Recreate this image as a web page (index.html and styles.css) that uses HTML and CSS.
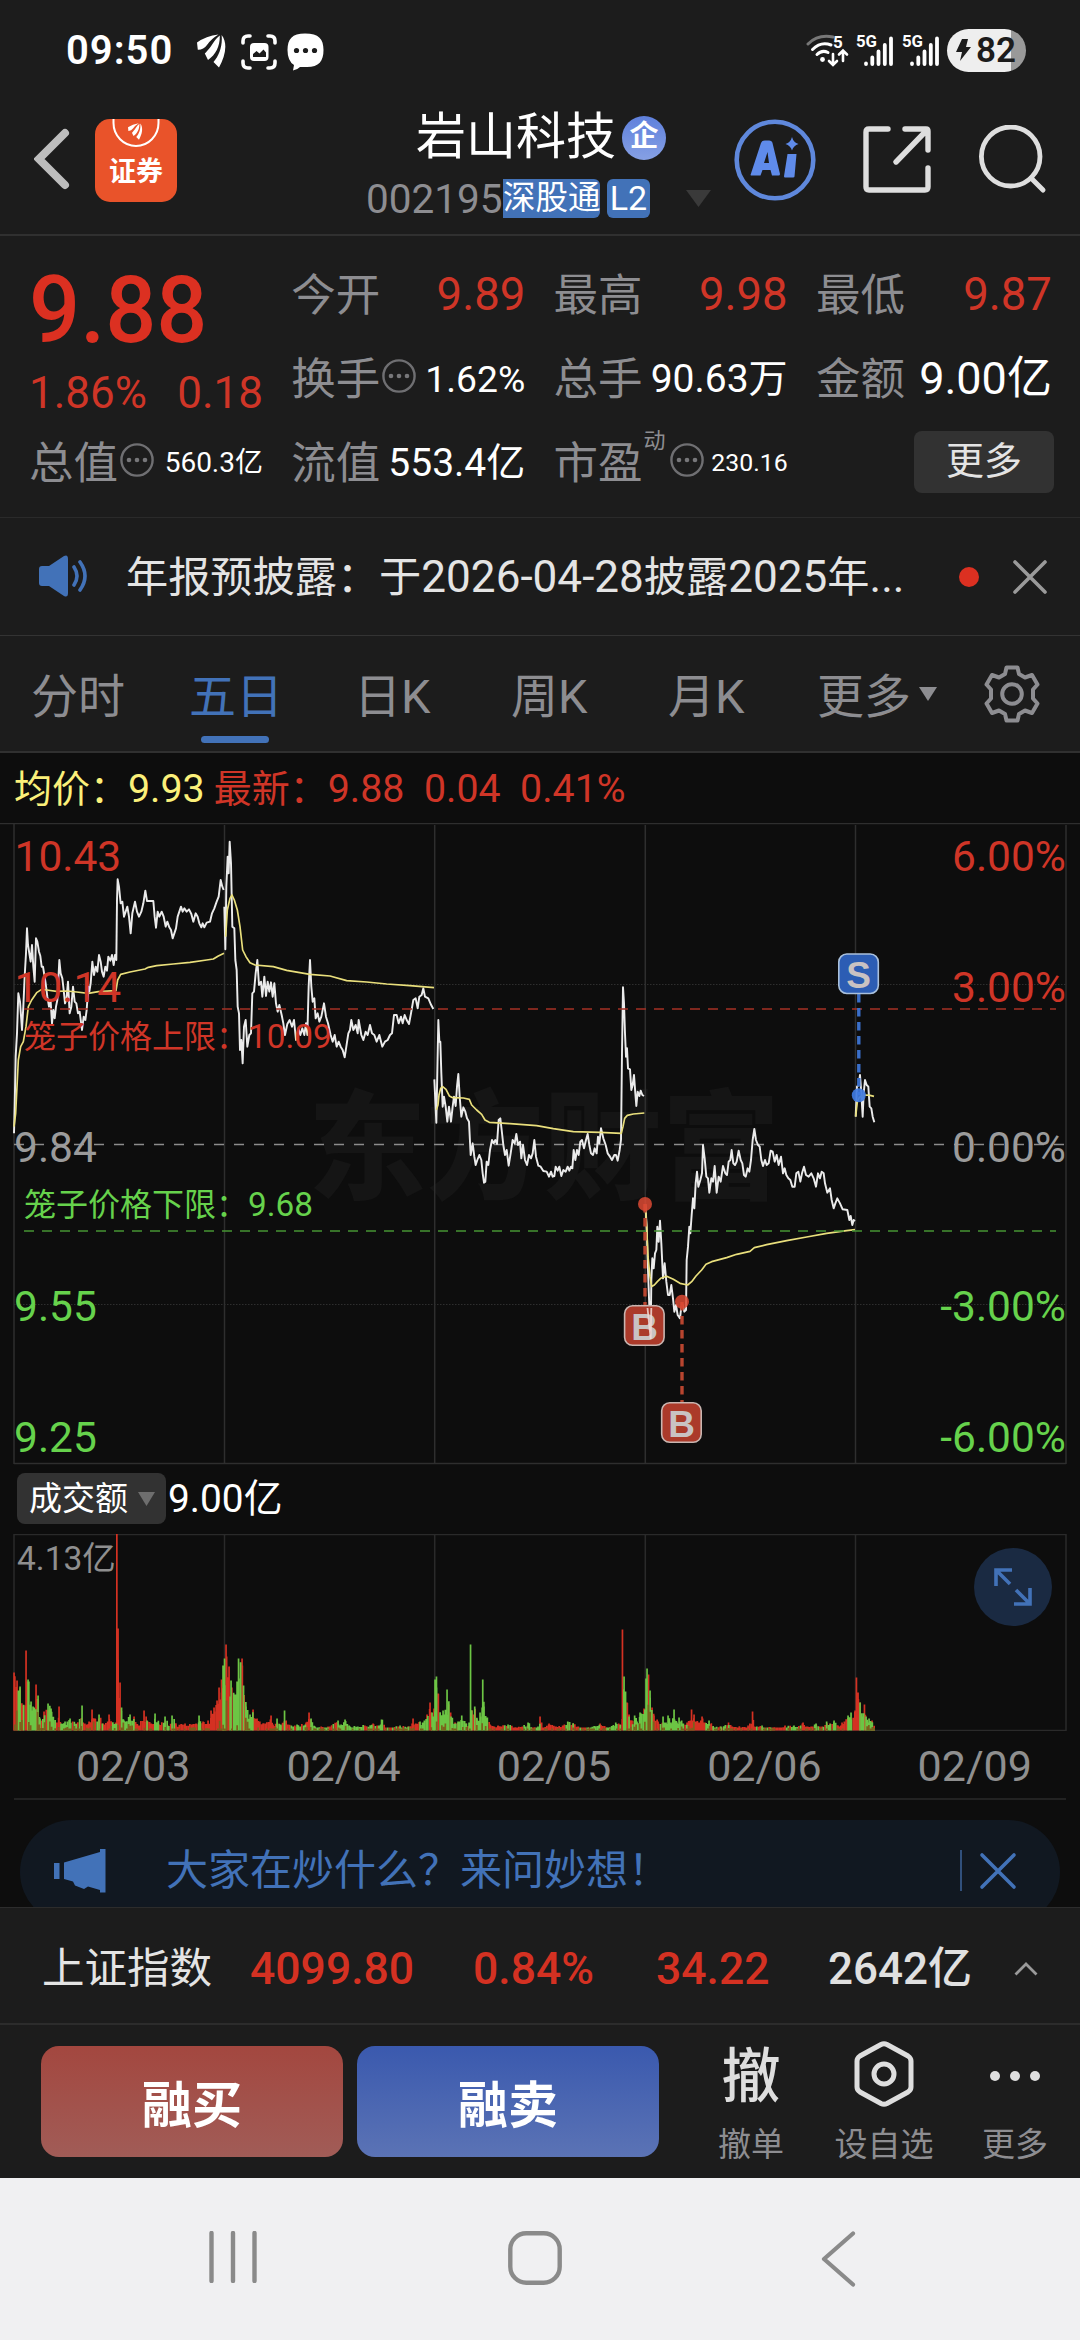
FILE: index.html
```html
<!DOCTYPE html>
<html lang="zh-CN">
<head>
<meta charset="utf-8">
<title>岩山科技 002195</title>
<link rel="stylesheet" href="styles.css">
</head>
<body>
<svg class="defs" width="0" height="0">
  <symbol id="more" viewBox="0 0 34 34"><circle cx="17" cy="17" r="15.6" fill="none" stroke="#6f6f72" stroke-width="2.4"/><circle cx="9" cy="17" r="2.3" fill="#77777a"/><circle cx="17" cy="17" r="2.3" fill="#77777a"/><circle cx="25" cy="17" r="2.3" fill="#77777a"/></symbol>
  <symbol id="wing" viewBox="0 0 30 34"><path d="M0 8.500Q9 2 21.500 .5 14 5 10 11 6.500 16 .8 15.800ZM22.800 1.500C17 6 15 12 10.500 16.500Q9 18.500 7.800 19.500L11 26C19 20.500 23 12 22.800 1.500ZM24.600 1C31 9 28.500 22 22 33.500L16.500 28C22 22 25.800 12 24.600 1Z" fill="currentColor"/></symbol>
</svg>
<div class="screen">

  <div class="status">
    <span class="time">09:50</span>
    <svg class="st-wing" width="30" height="34"><use href="#wing"/></svg>
    <svg class="st-cap" width="36" height="36" viewBox="0 0 36 36"><g fill="none" stroke="#fff" stroke-width="3.600" stroke-linecap="round"><path d="M2 9V7Q2 2 7 2h2M27 2h2q5 0 5 5v2M34 27v2q0 5-5 5h-2M9 34H7q-5 0-5-5v-2"/></g><rect x="9" y="9" width="18.500" height="18" rx="4" fill="#fff"/><path d="M12 23v-3l3.500-3 3 2.500 4-4 2.500 3V23z" fill="#1c1c1c"/></svg>
    <svg class="st-bub" width="37" height="38" viewBox="0 0 37 38"><path d="M18 .5C32 .5 36.500 6 36.500 17S32 34 20 34H13Q10 37 6 37.500L7 32Q.5 28 .5 17C.5 6 5 .5 18 .5Z" fill="#fff"/><g fill="#1c1c1c"><circle cx="9.500" cy="17.500" r="2.600"/><circle cx="18.500" cy="17.500" r="2.600"/><circle cx="27.500" cy="17.500" r="2.600"/></g></svg>
    <div class="st-right">
      <svg width="43" height="34" viewBox="0 0 43 34"><g fill="none" stroke-width="3" stroke-linecap="round"><path d="M2 11Q12 1 27 4" stroke="#777"/><path d="M6.500 16.500Q15 8 25 12" stroke="#fff"/><path d="M11 21.500Q16 16.500 22 19.500" stroke="#fff"/><path d="M27 21v10M23 28l4 4 4-4M37 28V19M33 21.500l4-4 4 4" stroke="#fff" stroke-width="2.600"/></g><circle cx="16.500" cy="26.500" r="2.400" fill="#fff"/><text x="27" y="15" font-size="17" font-weight="700" fill="#fff">5</text></svg>
      <svg width="40" height="40" viewBox="-1 -3 40 40"><text x="0" y="14" font-size="17" font-weight="700" textLength="21" lengthAdjust="spacingAndGlyphs" fill="#fff">5G</text><path d="M10 31v-.5M16.300 31v-6.500M22.500 31V18.500M28.800 31V12M35 31V5.500" stroke="#fff" stroke-width="3.800" stroke-linecap="round"/></svg>
      <svg width="40" height="40" viewBox="-1 -3 40 40"><text x="0" y="14" font-size="17" font-weight="700" textLength="21" lengthAdjust="spacingAndGlyphs" fill="#fff">5G</text><path d="M10 31v-.5M16.300 31v-6.500M22.500 31V18.500M28.800 31V12M35 31V5.500" stroke="#fff" stroke-width="3.800" stroke-linecap="round"/></svg>
      <div class="battery"><svg width="15" height="22" viewBox="0 0 15 22"><path d="M6 0h6L10 8h5L4 22l2-9H0z" fill="#1c1c1c"/></svg>82</div>
    </div>
  </div>

  <div class="head">
    <svg class="h-back" width="36" height="62" viewBox="0 0 36 62"><path d="M31 5 5 31 31 57" fill="none" stroke="#bdbdbd" stroke-width="8" stroke-linecap="round"/></svg>
    <div class="app"><svg width="48" height="30" viewBox="0 0 48 30"><path d="M1.500 0v4a22.500 23 0 0 0 45 0V0" fill="none" stroke="#fff" stroke-width="2"/><g color="#fff"><use href="#wing" x="15" y="4" width="17" height="17"/></g></svg><span>证券</span></div>
    <div class="name">
      <div class="n1">岩山科技<i>企</i></div>
      <div class="n2"><span>002195</span><b class="hk">深股通</b><b class="l2">L2</b></div>
    </div>
    <svg class="h-tri" width="25" height="17" viewBox="0 0 25 17"><path d="M0 0h25L12.500 17z" fill="#3a3a3a"/></svg>
    <svg class="h-ai" width="82" height="82" viewBox="0 0 82 82"><circle cx="41" cy="41" r="38.300" fill="none" stroke="#5f88dc" stroke-width="4.600"/><path d="M16.500 56 27 24q1-2.500 4-2.500h4q3 0 3.500 2.500L46 55q0 1.500-1.500 1.500h-6.500l-1.500-5.500h-8l-2 5.500h-8q-2 0-2-.5Z M33.500 33l-3.500 11h5z" fill="#5f8bea" fill-rule="evenodd"/><path d="M53.500 35h9l-2 22.500q0 1-1.500 1H51q-1 0-1-1.200z" fill="#5f8bea"/><path d="M58 18q1.500 5.500 6.500 7-5 1.500-6.500 6.500-1.500-5-6.500-6.500 5-1.500 6.500-7z" fill="#5f8bea"/></svg>
    <svg class="h-share" width="68" height="68" viewBox="0 0 68 68"><path d="M25 3H6Q3 3 3 6v55q0 3 3 3h56q3 0 3-3V42M42 3H63Q65 3 65 5V24M64 4 33 36" fill="none" stroke="#dedede" stroke-width="5.400" stroke-linecap="round"/></svg>
    <svg class="h-find" width="70" height="70" viewBox="0 0 70 70"><ellipse cx="32.700" cy="31.500" rx="29.300" ry="29.500" fill="none" stroke="#dedede" stroke-width="4.800"/><path d="M53 53 65 65" stroke="#dedede" stroke-width="5" stroke-linecap="round"/></svg>
  </div>

  <div class="quote">
    <div class="price">9.88</div>
    <div class="chg"><span>1.86%</span><span>0.18</span></div>
    <div class="c c13"><label>总值</label><svg width="34" height="34"><use href="#more"/></svg><em class="s28">560.3亿</em></div>
    <div class="c c21"><label>今开</label><em class="red">9.89</em></div>
    <div class="c c31"><label>最高</label><em class="red">9.98</em></div>
    <div class="c c41"><label>最低</label><em class="red">9.87</em></div>
    <div class="c c22"><label>换手</label><svg width="34" height="34"><use href="#more"/></svg><em class="s37">1.62%</em></div>
    <div class="c c32"><label>总手</label><em class="s39">90.63万</em></div>
    <div class="c c42"><label>金额</label><em class="s45">9.00亿</em></div>
    <div class="c c23"><label>流值</label><em class="s39">553.4亿</em></div>
    <div class="c c33"><label>市盈</label><sup>动</sup><svg width="34" height="34"><use href="#more"/></svg><em class="s25">230.16</em></div>
    <div class="c43">更多</div>
  </div>

  <div class="news">
    <svg class="horn" width="50" height="42" viewBox="0 0 50 42"><path d="M3 11h7L25 1q4-2 4 3v34q0 5-4 3L10 31H3q-3 0-3-3V14q0-3 3-3z" fill="#4272b8"/><path d="M35 12q6 9 0 18M41 7q10 14 0 28" fill="none" stroke="#4272b8" stroke-width="3.600" stroke-linecap="round"/></svg>
    <span>年报预披露：于<u>2026-04-28</u>披露<u>2025</u>年<u>...</u></span>
    <i></i>
    <svg class="x" width="36" height="36" viewBox="0 0 36 36"><path d="M3 3 33 33M33 3 3 33" stroke="#9a9a9a" stroke-width="3.600" stroke-linecap="round"/></svg>
  </div>

  <div class="tabs">
    <span>分时</span><span class="on">五日</span><span>日K</span><span>周K</span><span>月K</span><span>更多</span>
    <svg class="t-tri" width="18" height="14" viewBox="0 0 18 14"><path d="M0 0h18L9 14z" fill="#8d8d91"/></svg>
    <svg class="gear" width="58" height="58" viewBox="0 0 58 58"><g fill="none" stroke="#8d8d91" stroke-width="4"><path stroke-linejoin="round" d="M23.500 2.500h11l1.500 6.500 6 3.500 7-2.500 5.500 9.500-4.500 5v9l4.500 5-5.500 9.500-7-2.500-6 3.500-1.500 6.500h-11L22 49l-6-3.500L9 48 3.500 38.500l4.500-5v-9l-4.500-5L9 10l7 2.500L22 9z"/><circle cx="29" cy="29" r="9.800"/></g></svg>
  </div>

  <div class="legend"><span class="avg">均价：<u>9.93</u></span><span class="last">最新：<u>9.88&nbsp; 0.04&nbsp; 0.41%</u></span></div>

  <svg class="chart" width="1080" height="642" viewBox="0 823 1080 642">
    <g class="water"><text x="308" y="1190" textLength="472">东方财富</text></g>
    <g stroke="#2e2e2e" stroke-width="1.500" fill="none">
      <path d="M0 823.500H1080"/>
      <path d="M14 824V1464M224.500 825V1464M434.700 825V1464M645.300 825V1464M855.500 825V1464M1066 825V1464M14 1463.500H1066" />
      <path d="M14 984.500H1066M14 1304.500H1066" stroke-dasharray="1.500 1.500" stroke-width="1"/>
    </g>
    <path d="M14 1144.400H1066" stroke="#8c8c8c" stroke-width="1.500" stroke-dasharray="10 10" fill="none"/>
    <g class="price-line">
      <g transform="translate(0 820) scale(.33333)">
        <path d="M42 940L44 860 47 710 51 640 55 520 60 545 66 630 70 560 74 470 78 400 81 325 84 375 88 400 92 425 96 375 100 440 104 485 108 355 112 365 117 395 121 408 125 440 129 440 133 465 137 490 142 530 147 560 152 545 156 610 160 570 164 595 168 560 172 540 175 480 178 420 182 460 187 475 191 510 195 550 199 540 204 485 209 580 214 560 219 500 224 545 229 550 234 580 239 575 246 630 251 590 256 600 260 570 265 500 268 515 272 490 277 425 282 465 287 440 292 455 297 405 302 425 306 455 311 470 316 440 321 452 325 410 331 422 336 405 341 435 345 405 349 420 351 240 353 178 357 200 362 250 367 245 372 290 377 275 382 260 387 290 392 340 397 280 405 245 411 275 417 290 424 275 430 250 436 212 441 243 460 243 464 290 468 323 473 275 478 290 485 275 491 290 497 320 502 305 508 322 513 330 518 355 523 340 528 325 533 290 538 275 543 260 548 275 553 265 560 275 567 268 574 282 580 305 587 280 593 290 598 310 604 322 608 310 613 322 620 308 630 305 636 280 643 265 650 245 656 230 662 180 667 200 671 210"/>
        <path d="M673 260L676 388 679 200 683 110 686 160 689 65 693 130 697 320 703 325 706 420 710 450 713 560 717 580 720 690 724 660 728 730 732 620 737 600 742 680 748 645 753 640 757 520 762 515 767 460 772 420 777 495 783 485 787 530 793 470 798 528 803 485 808 515 813 487 818 530 823 490 828 550 833 575 838 555 845 585 850 610 855 645 862 612 869 600 876 620 882 600 888 660 895 625 901 645 907 625 913 645 918 610 922 645 926 500 930 420 934 500 938 545 943 535 947 595 953 580 958 605 964 590 972 550 978 590 984 610 992 645 998 665 1004 645 1010 680 1016 665 1022 680 1028 690 1034 712 1039 680 1045 640 1050 630 1054 600 1060 630 1067 615 1073 640 1076 600 1084 645 1090 660 1097 635 1103 645 1110 615 1116 640 1123 645 1130 665 1138 645 1147 680 1155 665 1163 660 1170 645 1176 640 1182 585 1190 585 1196 610 1203 590 1208 610 1214 585 1220 600 1227 612 1233 580 1240 540 1247 535 1253 565 1258 530 1265 525 1270 505 1275 530 1285 535 1292 552 1300 567"/>
        <path class="avg-l" d="M42 920L47 880 55 720 62 680 70 665 78 620 85 560 95 540 110 518 125 508 140 510 170 514 200 513 230 516 265 520 295 515 348 512 353 480 362 463 390 456 435 447 445 442 470 437 520 432 570 427 620 420 640 417 655 408 672 400M677 350L682 270 690 235 696 225 703 240 712 270 720 320 728 390 738 410 750 428 765 435 820 440 860 451 930 463 990 468 1040 482 1100 486 1160 492 1230 497 1302 503"/>
      </g>
      <g transform="translate(420 820) scale(.33333)">
        <path d="M43 778L49 908 55 600 58 665 61 665 64 760 68 860 72 830 77 860 82 905 87 860 93 905 98 860 102 830 107 858 111 800 115 762 119 830 124 890 130 862 136 875 141 895 147 905 152 1005 158 970 163 1010 167 1035 172 1020 178 1005 184 1020 188 1060 192 1088 196 1085 200 1025 205 1035 210 990 216 960 221 970 226 960 231 972 236 900 241 895 245 930 250 975 255 1005 260 990 266 1037 272 1000 278 960 284 970 289 942 294 975 300 965 304 1015 309 975 315 1020 321 1035 327 1005 333 1015 338 1000 343 960 348 1010 355 1037 362 1040 370 1053 380 1055 387 1070 393 1055 398 1070 403 1068 407 1040 413 1052 418 1040 424 1068 430 1050 437 1055 443 1040 448 1052 453 1040 457 1045 461 990 466 1020 471 990 476 1005 481 965 486 960 492 985 498 960 503 942 508 975 513 1000 519 1005 524 985 530 1000 534 950 538 970 543 925 550 955 557 975 563 1000 570 1010 576 1020 583 1005 588 1005 593 1022 599 990 603 960 606 700 609 502 612 550 615 640 618 710 621 685 624 745 630 748 634 810 638 795 642 765 646 820 649 858 653 815 658 828 662 812 667 825 672 828"/>
        <path class="avg-l" d="M49 870L54 855 57 825 62 805 68 800 78 808 88 828 98 833 130 834 148 838 155 855 170 870 185 883 195 900 208 907 270 911 350 917 400 926 460 935 540 937 604 940 609 920 614 895 622 886 640 882 673 879"/>
      </g>
      <g transform="translate(620 960) scale(.33333)">
        <path d="M76 732L80 800 84 930 88 1040 92 1137 94 960 97 895 101 925 105 880 109 870 112 800 116 845 120 782 124 850 129 955 134 910 139 965 144 1005 149 1005 154 975 159 1015 163 1055 168 1035 173 1065 180 1075 184 1040 188 1035 193 1055 198 1050 200 900 204 860 208 800 211 820 215 765 219 715 223 745 227 670 231 635 235 680 241 660 246 640 249 555 254 595 259 650 264 655 268 698 274 655 279 665 284 618 290 698 296 650 302 665 309 618 316 640 321 645 326 605 331 600 335 570 340 610 345 615 350 605 356 572 362 600 367 610 372 645 377 650 383 625 388 635 393 600 398 540 403 507 408 540 414 555 419 560 424 600 429 618 435 600 440 615 446 610 452 572 458 575 464 605 470 585 476 615 483 590 489 640 494 625 499 645 505 655 511 660 517 680 524 680 529 640 535 635 541 665 546 640 552 620 558 645 566 650 574 640 581 655 588 680 594 640 600 655 605 635 611 640 615 670 622 698 630 685 635 720 641 745 646 730 652 715 660 730 668 748 682 750 688 780 692 768 697 795 701 780 705 783"/>
        <path d="M707 470L711 380 716 375 720 345 724 400 728 470 731 400 735 360 740 375 745 380 749 440 754 445 758 470 763 487"/>
        <path class="avg-l" d="M76 735L80 800 84 890 90 950 95 980 103 975 112 965 122 955 140 949 160 958 180 970 203 975 215 965 228 948 245 930 258 913 275 905 320 893 350 883 390 874 403 863 440 854 500 842 560 831 620 820 680 812 705 809M707 470L712 425 718 412 735 405 750 406 762 409"/>
      </g>
    </g>
    <g fill="none" stroke-width="1.600" stroke-dasharray="10 8"><path d="M24 1009H1056" stroke="#a53024"/><path d="M24 1231H1056" stroke="#459433"/></g>
    <g class="axis">
      <g fill="#cf3527"><text x="14.500" y="870.500">10.43</text><text x="14.500" y="1002">10.14</text><text x="1066" y="870.500" class="r">6.00%</text><text x="1066" y="1002" class="r">3.00%</text></g>
      <g fill="#9b9b9b"><text x="14" y="1161.500">9.84</text><text x="1066" y="1161.500" class="r">0.00%</text></g>
      <g fill="#66d24c"><text x="14" y="1321">9.55</text><text x="14" y="1452">9.25</text><text x="1066" y="1321" class="r">-3.00%</text><text x="1066" y="1452" class="r">-6.00%</text></g>
    </g>
    <g class="cage"><text x="24" y="1048" fill="#cf3527">笼子价格上限：<tspan>10.09</tspan></text><text x="24" y="1215.500" fill="#66d24c">笼子价格下限：<tspan>9.68</tspan></text></g>
    <g fill="none" stroke-width="3.400" stroke-dasharray="8.500 5.500"><path d="M858.800 994V1095" stroke="#3a6fc9"/><path d="M645 1204V1305M682 1302V1402" stroke="#b8452f"/></g>
    <circle cx="858.800" cy="1095.300" r="7" fill="#3f7ae0" opacity=".92"/>
    <g fill="#dd4a34" opacity=".85"><circle cx="645" cy="1204" r="7"/><circle cx="682" cy="1301.700" r="7"/></g>
    <g class="tag" stroke-width="1.600" stroke="#c9b5b0"><rect x="838.800" y="954" width="39.500" height="39.500" rx="8" fill="#2c5db4" stroke="#a9c0dc"/><rect x="624.600" y="1305.800" width="39.500" height="39.500" rx="8" fill="#ab3a2a"/><rect x="661.700" y="1402.800" width="39.500" height="39.500" rx="8" fill="#ab3a2a"/></g>
    <g class="tag-t" fill="#c9c2c2"><text x="858.500" y="987.500">S</text><text x="644.500" y="1339.500">B</text><text x="681.500" y="1436.500">B</text></g>
    <path d="M647.500 1308L650.700 1339 651.300 1308" fill="none" stroke="#f3dcd6" stroke-width="1.800" opacity=".85"/>
  </svg>

  <div class="vhead"><div class="sel"><span>成交额</span><svg width="17" height="14" viewBox="0 0 17 14"><path d="M0 0h17L8.500 14z" fill="#6e6e6e"/></svg></div><span class="amt">9.00亿</span></div>

  <div class="vol">
    <svg id="vol" width="1080" height="197" viewBox="0 0 1080 197">
      <path d="M14 .5H1066M14 196.500H1066M14 0V197M224.500 0V197M434.700 0V197M645.300 0V197M855.500 0V197M1066 0V197" stroke="#2a2a2a" stroke-width="1.500" fill="none"/>
      <text x="17" y="36" font-size="33.500" fill="#8f8f8f">4.13亿</text>
      <path id="up" fill="#d43122"/><path id="down" fill="#6cc544"/>
      <path id="mix" fill="#7c611c"/>
    </svg>
    <div class="full"><svg width="38" height="38" viewBox="0 0 38 38"><g fill="none" stroke="#4272b8" stroke-width="3.600"><path d="M2 18V2H18M2 2 16 16M36 20V36H20M36 36 22 22"/></g></svg></div>
  </div>

  <div class="dates"><span>02/03</span><span>02/04</span><span>02/05</span><span>02/06</span><span>02/09</span></div>

  <div class="promo-wrap">
    <div class="promo">
      <svg width="52" height="44" viewBox="0 0 52 44"><path d="M0 14h5.500v16H0zM10 13.500 46 3V0h5.500v43.500H46V41L34 37.500 30 40 21 36.500 19 32.500 10 30z" fill="#4272b8"/></svg>
      <span>大家在炒什么？来问妙想！</span>
      <i></i>
      <svg class="x" width="38" height="38" viewBox="0 0 38 38"><path d="M3 3 35 35M35 3 3 35" stroke="#4272b8" stroke-width="3.600" stroke-linecap="round"/></svg>
    </div>
  </div>

  <div class="index">
    <span class="i0">上证指数</span><span class="i1">4099.80</span><span class="i2">0.84%</span><span class="i3">34.22</span><span class="i4">2642亿</span>
    <svg width="24" height="14" viewBox="0 0 24 14"><path d="M1.500 12.500 12 2 22.500 12.500" fill="none" stroke="#9a9a9a" stroke-width="2.800"/></svg>
  </div>

  <div class="bar">
    <div class="btn buy">融买</div>
    <div class="btn sell">融卖</div>
    <div class="tool"><div class="ic"><b class="che">撤</b></div><span>撤单</span></div>
    <div class="tool t2"><div class="ic"><svg width="60" height="66" viewBox="0 0 60 66"><g fill="none" stroke="#dedede" stroke-width="5"><path d="M27 3.500q3-1.500 6 0L54 15q3 2 3 5v26q0 3-3 5L33 62.500q-3 1.500-6 0L6 51q-3-2-3-5V20q0-3 3-5z"/><circle cx="30" cy="33" r="10"/></g></svg></div><span>设自选</span></div>
    <div class="tool t3"><div class="ic"><svg width="52" height="12" viewBox="0 0 52 12"><g fill="#dedede"><circle cx="6" cy="6" r="5"/><circle cx="26" cy="6" r="5"/><circle cx="46" cy="6" r="5"/></g></svg></div><span>更多</span></div>
  </div>

  <div class="nav">
    <svg width="52" height="52" viewBox="0 0 52 52"><path d="M3.500 2v48M25 2v48M46.500 2v48" stroke="#8a8a8a" stroke-width="4.400" stroke-linecap="round"/></svg>
    <svg width="54" height="54" viewBox="0 0 54 54"><rect x="2.300" y="2.300" width="49.400" height="49.400" rx="16" fill="none" stroke="#8a8a8a" stroke-width="4.400"/></svg>
    <svg width="36" height="56" viewBox="0 0 36 56"><path d="M33 2.500 4 28 33 53.500" fill="none" stroke="#8a8a8a" stroke-width="4.200" stroke-linecap="round" stroke-linejoin="round"/></svg>
  </div>
</div>
<script src="volume.js"></script>
</body>
</html>
```
FILE: styles.css
```css
* { box-sizing: border-box; }
body { margin: 0; background: #1c1c1c; font-family: Roboto, "Noto Sans CJK SC", sans-serif; color: #fff; }
svg { display: block; flex: none; }
svg text { font-family: Roboto, "Noto Sans CJK SC", sans-serif; }
em, i, b { font-style: normal; font-weight: 400; }
u { text-decoration: none; font-size: 1.045em; }
.defs { position: absolute; }
.screen { width: 1080px; height: 2340px; display: flex; flex-direction: column; overflow: hidden; white-space: nowrap; }
.screen > * { flex: none; }

.status { height: 100px; display: flex; align-items: center; padding-left: 66px; padding-right: 54px; }
.time { width: 131px; font-size: 40px; font-weight: 600; letter-spacing: 1px; line-height: 40px; padding-top: 1px; }
.st-wing { margin-right: 14px; margin-top: 2px; }
.st-cap { margin-right: 10px; margin-top: 3px; }
.st-bub { margin-top: 3px; }
.st-right { margin-left: auto; display: flex; align-items: center; gap: 6px; }
.battery { width: 79px; height: 43px; border-radius: 22px; display: flex; align-items: center; gap: 5px; padding-left: 9px; font-size: 35px; font-weight: 600; color: #1c1c1c; background: linear-gradient(90deg, #eee 64px, #999 64px); }

.head { height: 136px; border-bottom: 2px solid #303030; display: grid; grid-template-columns: 95px 271px 320px 49px 127px 119px 99px; }
.h-back { margin: 28px 0 0 34px; }
.app { width: 82px; height: 83px; margin-top: 19px; border-radius: 15px; background: #e9532a; display: flex; flex-direction: column; align-items: center; }
.app span { font-family: "Noto Sans CJK SC", sans-serif; font-weight: 700; font-size: 27px; line-height: 34px; margin-top: 4px; }
.n1 { display: flex; align-items: center; height: 74px; padding-left: 50px; font-size: 50px; line-height: 74px; }
.n1 i { width: 44px; height: 44px; margin: 2px 0 0 6px; border-radius: 50%; background: linear-gradient(#5f80dc, #86a0e4); font-size: 29px; line-height: 40px; font-weight: 700; text-align: center; }
.n2 { display: flex; align-items: center; height: 40px; margin-top: 4px; }
.n2 span { font-size: 40.5px; color: #8d8d91; margin-top: 2px; width: 137px; }
.n2 b { height: 39px; line-height: 38px; background: #4272b8; border-radius: 6px; }
.hk { width: 97px; font-size: 32.500px; }
.n2 .hk { border-radius: 0 6px 6px 0; }
.l2 { width: 43px; margin-left: 7px; font-size: 34px; text-align: center; }
.h-tri { margin-top: 90px; }
.h-ai { margin: 19px 0 0 -1px; }
.h-share { margin: 26px 0 0 1px; }
.h-find { margin: 25px 0 0 -3px; }

.quote { height: 282px; border-bottom: 1px solid #2a2a2a; padding: 16px 28px 0 30px; display: grid; grid-template-columns: 233px 233px 233px 235px; grid-template-rows: 84px 84px 84px; column-gap: 29.300px; align-items: center; }
.price { grid-area: 1/1; font-size: 90px; font-weight: 500; color: #dc3021; line-height: 90px; margin-top: 33px; margin-left: -1px; transform: scaleY(1.04); }
.chg { grid-area: 2/1; display: flex; justify-content: space-between; font-size: 44px; color: #cf3527; margin-top: 30px; margin-left: -1px; }
.c { display: flex; align-items: center; height: 84px; line-height: 84px; }
.c label { font-size: 44.500px; color: #8d8d91; margin-left: -1px; margin-top: 4px; }
.c svg { margin-top: -5px; margin-left: 2px; }
.c em { margin-left: auto; margin-top: 1px; }
.c sup { font-size: 22px; line-height: 22px; color: #8d8d91; margin: -43px 0 0 1px; }
.c sup + svg { margin-left: 4px; }
.red { color: #cf3527; font-size: 45.500px; }
.c13 { grid-area: 3/1; } .c21 { grid-area: 1/2; } .c31 { grid-area: 1/3; } .c41 { grid-area: 1/4; }
.c22 { grid-area: 2/2; } .c32 { grid-area: 2/3; } .c42 { grid-area: 2/4; }
.c23 { grid-area: 3/2; } .c33 { grid-area: 3/3; }
.c43 { grid-area: 3/4; justify-self: end; width: 140px; height: 62px; border-radius: 8px; background: #323232; color: #e4e4e4; font-size: 38px; line-height: 60px; text-align: center; margin-right: -2px; }
.c .s28 { font-size: 28px; margin-top: 1px; } .s37 { font-size: 37.300px; } .c .s39 { font-size: 39px; margin-top: 2px; } .c .s45 { font-size: 45px; margin-top: 2px; } .c .s25 { font-size: 24.800px; margin-top: 1px; }

.news { height: 118px; border-bottom: 1.500px solid #333; display: flex; align-items: center; padding-left: 39px; color: #e4e4e4; font-size: 42.200px; }
.horn { margin-right: 37px; margin-top: -2px; }
.news span { width: 833px; line-height: 60px; margin-top: 1px; }
.news i { width: 20px; height: 20px; border-radius: 50%; background: #dc3021; margin-right: 33px; }

.tabs { height: 117px; border-bottom: 2px solid #303030; display: grid; grid-template-columns: 158px 165px 157px 157px 149px 102px 65px 60px; padding-left: 31px; font-size: 47px; line-height: 121px; color: #8d8d91; }
.tabs .on { color: #4272b8; position: relative; }
.on::after { content: ""; position: absolute; left: 12px; top: 100px; width: 68px; height: 7px; border-radius: 4px; background: #4272b8; }
.t-tri { margin-top: 51px; }
.gear { margin-top: 29px; margin-left: -1px; }

.legend { height: 70px; background: #0d0d0d; padding-left: 14px; display: flex; gap: 9px; font-size: 38px; line-height: 72px; }
.legend u { font-size: 1.035em; }
.avg { color: #fbf07a; }
.last { color: #cf3527; }

.chart { background: #0d0d0d; }
.water { font-size: 118px; font-weight: 900; fill: #151515; }
.price-line path { fill: none; stroke: #ebebeb; stroke-width: 5.800; stroke-linejoin: round; }
.price-line .avg-l { stroke: #e9df7c; stroke-width: 5; }
.axis { font-size: 42.500px; }
.axis .r { text-anchor: end; }
.cage { font-size: 32px; }
.cage tspan { font-size: 33.300px; }
.tag-t { font-size: 37px; font-weight: 700; text-anchor: middle; }
.tag-t text { font-family: "Liberation Sans", sans-serif; }

.vhead { height: 69px; background: #0d0d0d; display: flex; padding: 8px 0 0 17px; }
.sel { width: 149px; height: 51px; border-radius: 8px; background: #323232; display: flex; align-items: center; gap: 10px; padding-left: 12px; font-size: 33px; line-height: 48px; }
.sel span { margin-top: 0; }
.amt { margin-left: 2px; line-height: 52px; font-size: 38.800px; }

.vol { height: 197px; background: #0d0d0d; position: relative; }
.full { position: absolute; left: 974px; top: 14px; width: 78px; height: 78px; border-radius: 50%; background: #1a2a42; display: grid; place-items: center; }

.dates { height: 69px; margin: 0; background: linear-gradient(#222, #222) 14px 67px / 1052px 2px no-repeat #0d0d0d; display: grid; grid-template-columns: repeat(5, 210.400px); padding-left: 28px; font-size: 43px; line-height: 70px; text-align: center; color: #8f8f8f; }

.promo-wrap { height: 107px; background: #0d0d0d; padding: 20px 20px 0; overflow: hidden; }
.promo { height: 104px; border-radius: 52px; background: #111821; display: flex; align-items: center; padding-left: 34px; color: #4272b8; font-size: 42px; padding-bottom: 3px; }
.promo span { margin: 0 0 0 60px; width: 794px; line-height: 60px; }
.promo i { width: 1.500px; height: 41px; background: #31507c; margin-right: 17px; }

.index { height: 118px; border-top: 1px solid #2c2c2c; border-bottom: 2px solid #2c2c2c; display: grid; grid-template-columns: 208px 223px 183px 172px 186px 60px; padding-left: 42px; align-items: center; font-size: 44.500px; padding-top: 6px; line-height: 60px; }
.i0 { font-size: 42.500px; color: #e4e4e4; }
.i1, .i2, .i3 { font-weight: 500; color: #d43122; }
.i4 { font-weight: 500; color: #e0e0e0; font-size: 44px; }

.bar { height: 153px; display: flex; padding: 21px 0 0 41px; }
.btn { width: 302px; height: 111px; margin-right: 14px; border-radius: 18px; font-size: 50px; font-weight: 700; text-align: center; line-height: 120px; }
.buy { background: linear-gradient(#a3473f, #a15c57); }
.sell { background: linear-gradient(#3a59ae, #5b73b5); }
.tool { width: 100px; margin-left: 28px; text-align: center; color: #8d8d91; font-size: 33px; line-height: 41px; }
.ic { height: 66px; margin-top: -5px; margin-bottom: 17px; display: flex; align-items: center; justify-content: center; }
.che { font-size: 59px; font-weight: 500; color: #dedede; line-height: 66px; padding-top: 5px; }
.t2 { margin-left: 33px; }
.t3 { margin-left: 31px; }
.t3 .ic { padding-top: 4px; }

.nav { flex: 1 0 auto !important; background: #f0f0f2; display: grid; grid-template-columns: 300px 312px 60px; padding: 53px 0 0 208px; }
```
FILE: volume.js
```js
// Turnover profile: [x, height, direction]; r = up, g = down.
const keys = `14 58 r,17 50 r,20 44 g,23 25 r,26 80 r,28 51 g,31 29 g,33 24 g,36 46 r,38 35 g,40 12 g,44 19 r,48 27 g,51 22 g,55 9 r,59 24 r,61 7 g,65 9 g,70 12 g,76 7 r,82 25 g,84 7 r,89 9 r,92 21 r,95 12 r,99 16 g,103 7 r,109 16 r,113 6 g,115.5 8 r,116.8 197 r,118 102 r,120 48 r,121.5 23 g,124 10 g,130 16 g,134 14 r,138 5 r,144 20 r,147 10 g,152 6 r,155 17 g,159 6 r,165 14 g,168 5 r,172 15 g,176 6 r,185 7 r,196 7 r,199 15 g,203 9 r,208 10 r,211 20 r,214 23 r,217 30 r,219 43 r,221.500 51 r,223 65 g,224.500 72 g,226 86 r,229 64 r,231 50 g,234 36 g,237 49 g,238.500 72 g,242 72 r,243.500 45 g,246 24 g,250 16 g,253 21 r,257 12 r,263 7 r,271 15 r,273 6 r,277 12 g,281 5 r,284.500 20 g,286 6 r,297 6 g,306 8 r,309 18 r,311 12 g,315 4 g,328 4 r,338 10 g,341 6 g,345 11 g,350 4 g,373 7 r,379 5 g,381.500 11 g,385 3 r,400 5 g,408 4 r,413 12 r,420 9 g,427 16 r,430 28 r,432 18 g,434 22 r,435 51 g,436.400 54 g,438 37 r,440 18 g,443 20 g,447 41 g,448.600 26 r,451 14 g,455 8 r,458 9 g,461.700 15 g,466 7 r,469 8 g,470.500 86 g,472 20 r,474.700 24 g,477 12 g,480 18 g,482.700 51 g,484 24 g,487 11 r,490 6 r,498 5 r,508 6 g,516 3 r,528 8 g,532 3 r,538 4 g,540 14 r,542 3 r,549 7 r,556 4 r,567.700 9 g,573 7 r,578 4 r,588 3 g,600 7 r,607 3 g,615.700 8 g,620 6 r,622.400 101 r,624 54 g,625.500 39 g,627 28 r,629 14 g,632 10 r,634.600 15 g,637 9 g,640 18 g,644 22 r,646 52 g,647 62 g,648.500 56 r,650 40 g,652 23 r,654 15 r,658 9 r,663 14 g,666 8 g,668 15 g,671 8 g,674 21 g,677 8 g,679 13 g,683 7 g,687 8 r,691.500 21 r,694 16 r,698 8 r,702 14 r,705 8 r,709 10 g,713 4 r,721 4 g,728.500 8 r,732 4 r,748 5 r,752.500 19 r,754 4 r,762 5 g,770 3 r,785 5 r,794 5 g,803 8 r,806 4 r,816 7 g,822 4 r,826.600 9 g,830 7 r,834 10 g,838 5 r,842 8 r,848 15 g,851 18 g,855 20 r,856.400 53 r,858 38 r,860 28 g,862 14 g,864.400 26 r,866 14 g,869 12 g,872 10 r,874 2 g`
  .split(',').map(s => { const [x, h, d] = s.split(' '); return [+x, +h, d]; });
const out = { r: '', g: '', m: '' };
const bar = (c, x, h) => { out[c] += `M${x.toFixed(1)} 196.500v${(-h).toFixed(1)}h1.700v${h.toFixed(1)}z`; };
let seed = 7;
const rnd = () => (seed = (seed * 16807) % 2147483647) / 2147483647;
for (let i = 1, x = 14; x < 874; x += 1.75) {
  while (keys[i][0] < x) i++;
  const [x0, h0, d0] = keys[i - 1], [x1, h1, d1] = keys[i];
  const t = (x - x0) / (x1 - x0);
  const h = Math.min(h0 + (h1 - h0) * t, Math.min(h0, h1) + 6);
  bar(rnd() < .7 ? d0 : d1, x, Math.max(3, h * (.6 + rnd() * .4)));
  if (rnd() < .5) bar('m', x, Math.max(2, h * .5 * rnd()));
}
keys.forEach(([x, h, d]) => bar(d, x - .8, h));
document.getElementById('up').setAttribute('d', out.r);
document.getElementById('down').setAttribute('d', out.g);
document.getElementById('mix').setAttribute('d', out.m);
```
